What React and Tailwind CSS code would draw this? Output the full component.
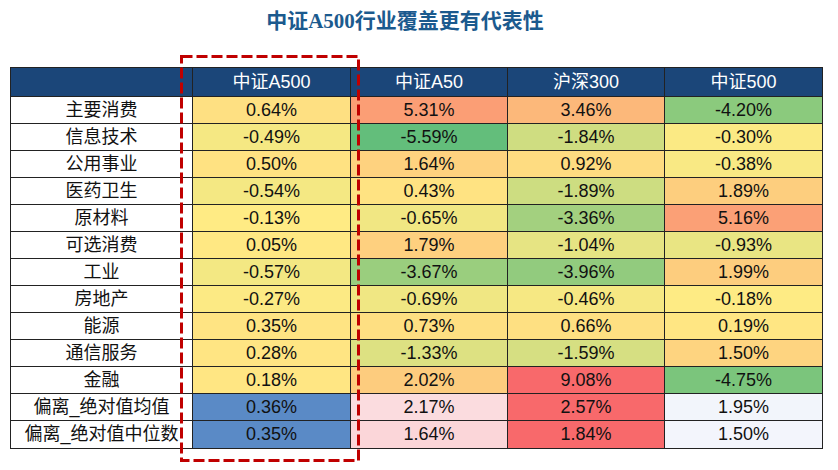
import React from "react";

const rows = [
  ["主要消费", 0.64, 5.31, 3.46, -4.2],
  ["信息技术", -0.49, -5.59, -1.84, -0.3],
  ["公用事业", 0.5, 1.64, 0.92, -0.38],
  ["医药卫生", -0.54, 0.43, -1.89, 1.89],
  ["原材料", -0.13, -0.65, -3.36, 5.16],
  ["可选消费", 0.05, 1.79, -1.04, -0.93],
  ["工业", -0.57, -3.67, -3.96, 1.99],
  ["房地产", -0.27, -0.69, -0.46, -0.18],
  ["能源", 0.35, 0.73, 0.66, 0.19],
  ["通信服务", 0.28, -1.33, -1.59, 1.5],
  ["金融", 0.18, 2.02, 9.08, -4.75],
];

const devRows = [
  ["偏离_绝对值均值", 0.36, 2.17, 2.57, 1.95],
  ["偏离_绝对值中位数", 0.35, 1.64, 1.84, 1.5],
];

const heads = ["中证A500", "中证A50", "沪深300", "中证500"];

const mix = (a, b, t) => {
  const k = Math.max(0, Math.min(1, t));
  return `rgb(${a.map((x, i) => Math.round(x + (b[i] - x) * k)).join(",")})`;
};

const median = (arr) => {
  const s = [...arr].sort((a, b) => a - b);
  const m = Math.floor(s.length / 2);
  return s.length % 2 ? s[m] : (s[m - 1] + s[m]) / 2;
};

// 3-colour scales, same as excel defaults
const scale = (vals, lo, mid, hi) => {
  const min = Math.min(...vals);
  const max = Math.max(...vals);
  const med = median(vals);
  return (v) =>
    v <= med ? mix(lo, mid, (v - min) / (med - min)) : mix(mid, hi, (v - med) / (max - med));
};

const GREEN = [99, 190, 123];
const YELLOW = [255, 235, 132];
const RED = [248, 105, 107];
const BLUE = [90, 138, 198];
const WHITE = [252, 252, 255];

const mainColor = scale(rows.flatMap((r) => r.slice(1)), GREEN, YELLOW, RED);

const fmt = (v) => `${v.toFixed(2)}%`;

const Row = ({ row, colorOf, last }) => (
  <>
    <div
      className={`h-[27px] flex items-center justify-center border-r border-[#222] bg-white whitespace-nowrap ${
        last ? "" : "border-b"
      }`}
    >
      {row[0]}
    </div>
    {row.slice(1).map((v, i) => (
      <div
        key={i}
        className={`h-[27px] flex items-center justify-center border-[#222] ${i < 3 ? "border-r" : ""} ${
          last ? "" : "border-b"
        }`}
        style={{ background: colorOf(v) }}
      >
        {fmt(v)}
      </div>
    ))}
  </>
);

export default function App() {
  return (
    <div className="relative w-[838px] h-[470px] bg-white overflow-hidden">
      <div className="pt-[10px] pr-[28px] flex justify-center">
        <div
          className="text-[21px] leading-[22px] font-bold text-[#1b5a8e]"
          style={{ fontFamily: '"Liberation Serif", "Noto Sans CJK SC", serif' }}
        >
          中证A500行业覆盖更有代表性
        </div>
      </div>

      <div
        className="ml-[10px] mt-[35px] w-[813px] border border-[#222] grid grid-cols-[182px_158px_157px_157px_157px] text-[18px] text-[#111]"
        style={{ fontFamily: '"Liberation Sans", "Noto Sans CJK SC", sans-serif' }}
      >
        <div className="h-[29px] bg-[#1b4679] border-r border-b border-[#222]" />
        {heads.map((h, i) => (
          <div
            key={h}
            className={`h-[29px] bg-[#1b4679] text-white flex items-center justify-center border-b border-[#222] ${
              i < 3 ? "border-r" : ""
            }`}
          >
            {h}
          </div>
        ))}

        {rows.map((r) => (
          <Row key={r[0]} row={r} colorOf={mainColor} />
        ))}
        {devRows.map((r, i) => (
          <Row
            key={r[0]}
            row={r}
            colorOf={scale(r.slice(1), BLUE, WHITE, RED)}
            last={i === devRows.length - 1}
          />
        ))}
      </div>

      {/* red dashed highlight round the A500 column */}
      <svg className="absolute left-[180px] top-[55px]" width="181" height="408">
        <rect
          x="1.5"
          y="1.5"
          width="177"
          height="404"
          fill="none"
          stroke="#c00000"
          strokeWidth="3"
          strokeDasharray="11 4"
        />
      </svg>
    </div>
  );
}
